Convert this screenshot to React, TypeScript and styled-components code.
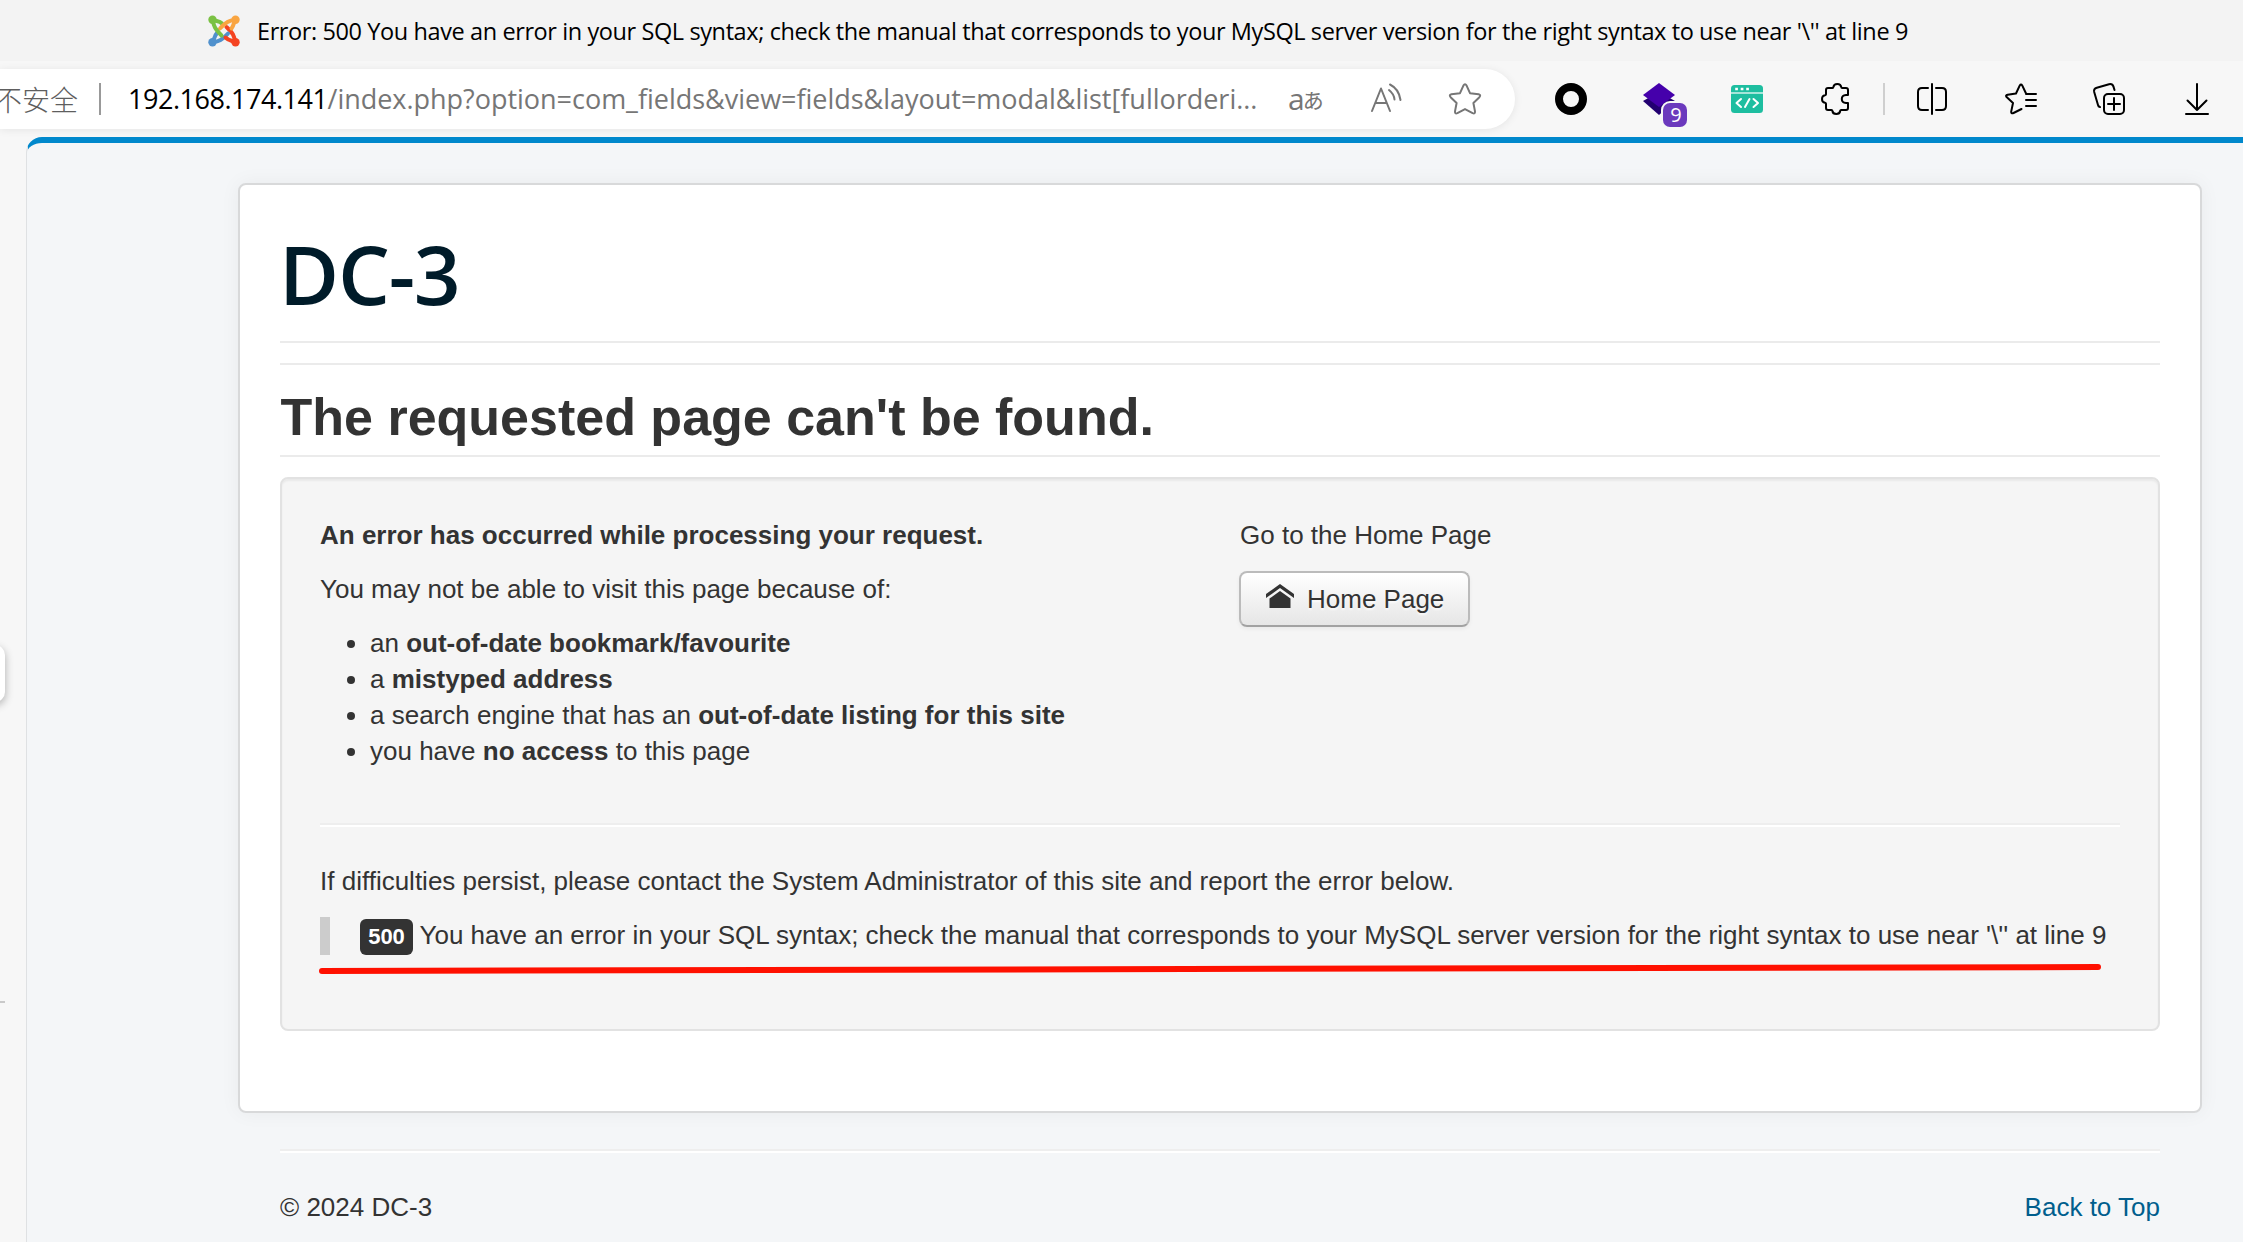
import React from "react";
import styled, { createGlobalStyle } from "styled-components";

const Global = createGlobalStyle`
  * { box-sizing: border-box; }
  html, body { margin: 0; padding: 0; overflow: hidden; }
  body { background: #f7f7f7; }
  p, ul, h1, h2 { margin: 0; }
`;
const uiFont = `"Open Sans", "Noto Sans", "Noto Sans CJK SC", sans-serif`;

const Window = styled.div`
  width: 2243px; height: 1242px; overflow: hidden;
  display: flex; flex-direction: column; background: #f7f7f7;
  font-family: "Liberation Sans", Arial, sans-serif;
`;
const TabBar = styled.header`
  height: 61px; flex: none; background: #f3f3f3; padding-left: 208px;
  display: flex; align-items: center; gap: 17px;
`;
const TabTitle = styled.span`
  font: 400 23.5px/60px ${uiFont}; color: #000; white-space: pre; letter-spacing: -0.4px;
`;
const Toolbar = styled.div`
  height: 76px; flex: none; display: flex; align-items: center; background: #f7f7f7;
`;
const Address = styled.div`
  width: 1515px; height: 60px; flex: none; background: #fff; border-radius: 0 30px 30px 0;
  box-shadow: 0 1px 8px rgba(0,0,0,.08);
  display: flex; align-items: center;
`;
const Security = styled.span`
  width: 105px; margin-left: -6px; flex: none; font: 400 28px/58px "Noto Sans CJK SC", sans-serif; font-weight: 300; color: #5e5e5e; white-space: nowrap;
`;
const Rule = styled.i<{ $h: number; $c: string }>`
  width: 2px; height: ${p => p.$h}px; background: ${p => p.$c}; flex: none;
`;
const Url = styled.span`
  width: 1160px; margin-left: 27px; flex: none; color: #767676; white-space: nowrap;
  font: 400 27px/60px ${uiFont}; letter-spacing: -0.02px;
  b { font-weight: 400; color: #000; letter-spacing: -0.47px; }
`;
const Translate = styled.span`
  width: 36px; margin-right: 46px; flex: none; color: #767676; white-space: nowrap;
  display: flex; align-items: center;
  font: 400 30px/54px ${uiFont}; letter-spacing: -1px;
  small { font: 400 21px/54px "Noto Sans CJK JP", sans-serif; margin-left: -1px; }
`;
const Icon = styled.svg<{ $ml?: number }>`
  flex: none; display: block; margin-left: ${p => p.$ml ?? 0}px; overflow: visible;
  fill: none; stroke-linecap: round; stroke-linejoin: round;
`;
const Extension = styled.div`
  position: relative; margin-left: 56px; width: 32px; height: 32px; flex: none;
`;
const Count = styled.span`
  position: absolute; left: 20px; top: 20px; width: 24px; height: 24px; border-radius: 7px;
  background: #6b39bd; color: #fff; box-shadow: 0 0 0 2px #f7f7f7;
  font: 400 20px/23px ${uiFont}; text-align: center; padding-left: 2px;
`;
const Body = styled.div`
  flex: 1; display: flex; min-height: 0;
`;
const Side = styled.aside`
  width: 26px; flex: none; display: flex; flex-direction: column; overflow: hidden;
`;
const SideTab = styled.div`
  margin: 508px 0 299px -15px; width: 20px; height: 57px; flex: none; border-radius: 10px; background: #fff;
  box-shadow: 0 3px 8px rgba(0,0,0,.3);
`;
const SideLine = styled.div`
  width: 5px; height: 2px; background: #c9c9c9;
`;
const Page = styled.main`
  flex: 1; min-width: 0; background: #f4f6f8; border-left: 1px solid #dfe1e3; border-top: 6px solid #0088cc;
  border-top-left-radius: 16px; padding: 40px 41px 0 211px; color: #333;
  font-size: 26px; line-height: 36px;
`;
const Card = styled.section`
  height: 930px; background: #fff; border: 2px solid #d8d9da; border-radius: 8px; padding: 0 40px;
  box-shadow: 0 0 20px rgba(0,0,0,.05);
`;
const Brand = styled.h1`
  height: 158px; border-bottom: 2px solid #ebebeb; padding-top: 30px; text-indent: -1px;
  font: 600 82px/116px "Open Sans", sans-serif; color: #001b29; letter-spacing: -1.2px; white-space: nowrap;
`;
const Heading = styled.h2`
  margin: 20px 0; height: 94px; border-top: 2px solid #ebebeb; border-bottom: 2px solid #ebebeb; padding-top: 15px;
  font-size: 52px; line-height: 74px; font-weight: 700; white-space: nowrap; text-indent: 0.5px;
`;
const Well = styled.div`
  height: 554px; background: #f5f5f5; border: 2px solid #e2e2e2; border-radius: 8px; padding: 38px;
  box-shadow: inset 0 2px 2px rgba(0,0,0,.05);
`;
const Columns = styled.div`
  display: grid; grid-template-columns: 880px 880px; gap: 40px; height: 270px;
`;
const Text = styled.p<{ $bold?: boolean }>`
  margin-bottom: 18px; font-weight: ${p => (p.$bold ? 700 : 400)}; white-space: nowrap;
`;
const List = styled.ul`
  padding-left: 50px;
`;
const HomeButton = styled.a`
  display: inline-flex; align-items: center; width: 231px; height: 56px; margin-left: -1px; padding-left: 25px;
  border: 2px solid #bbb; border-bottom-color: #a2a2a2; border-radius: 8px;
  background: linear-gradient(#fff, #e6e6e6); box-shadow: 0 2px 4px rgba(0,0,0,.05);
  text-shadow: 0 2px 2px rgba(255,255,255,.75); white-space: nowrap;
`;
const HomeIcon = styled.svg`
  flex: none; margin: -6px 13px 0 0;
`;
const Divider = styled.hr`
  margin: 36px 0; height: 4px; border: 0; border-top: 2px solid #eee; background: #fff;
`;
const Quote = styled.blockquote`
  position: relative; margin: 0; height: 38px; border-left: 10px solid #ccc; padding-left: 30px;
  display: flex; align-items: flex-start; white-space: nowrap;
`;
const Badge = styled.span`
  width: 53px; height: 36px; margin: 2px 6.5px 0 0; border-radius: 6px; background: #333; color: #fff;
  font-size: 22px; line-height: 35px; font-weight: 700; text-align: center;
`;
const Underline = styled.svg`
  position: absolute; left: -11px; top: 44px; overflow: visible;
`;
const Footer = styled.footer`
  padding: 0 42px;
`;
const FooterRow = styled.div`
  display: flex; justify-content: space-between;
  a { color: #005e8d; }
`;

const Joomla = () => (
  <Icon width="32" height="32" viewBox="0 0 32 32" strokeWidth="4">
    <path d="M27 27 C26.5 21 25 18 18.5 12" stroke="#f44321" />
    <path d="M5 27 C11 26.5 14 25 20 18.5" stroke="#5091cd" />
    <path d="M27 27 C23 25.5 20.5 25.5 17.5 22.5" stroke="#f44321" />
    <path d="M5 27 C6.5 23 6.5 20.5 9 18" stroke="#5091cd" />
    <path d="M5 5 C9 6.5 11.5 6 14 8.5" stroke="#7ac143" />
    <path d="M27 5 C21 5.5 18 7 12 13.5" stroke="#f9a541" />
    <path d="M27 5 C25.5 9 25.5 11 23.5 13.5" stroke="#f9a541" />
    <path d="M5 5 C5.5 11 7 14 13.5 20.5" stroke="#7ac143" />
    <g stroke="none">
      <circle cx="4.5" cy="4.8" r="4.2" fill="#7ac143" /><circle cx="27.5" cy="4.8" r="4.2" fill="#f9a541" />
      <circle cx="27.5" cy="27.2" r="4.2" fill="#f44321" /><circle cx="4.5" cy="27.2" r="4.2" fill="#5091cd" />
    </g>
  </Icon>
);

export default function App() {
  return (
    <Window>
      <Global />
      <TabBar>
        <Joomla />
        <TabTitle>{`Error: 500 You have an error in your SQL syntax; check the manual that corresponds to your MySQL server version for the right syntax to use near '\\'' at line 9`}</TabTitle>
      </TabBar>
      <Toolbar>
        <Address>
          <Security>不安全</Security>
          <Rule $h={32} $c="#999" />
          <Url><b>192.168.174.141</b>/index.php?option=com_fields&amp;view=fields&amp;layout=modal&amp;list[fullorderi...</Url>
          <Translate>a<small>あ</small></Translate>
          <Icon width="32" height="32" viewBox="0 0 32 32" stroke="#767676" strokeWidth="2">
            <path d="M2 28 L11 5.5 L20 28 M5.2 20 H16.8 M19 7 Q24 11 24.5 16.5 M20 1.5 Q29 6 30.5 17" />
          </Icon>
          <Icon $ml={46} width="34" height="32" viewBox="0 0 34 32" stroke="#767676" strokeWidth="2">
            <path d="M15.4 2.6 Q17 0 18.6 2.6 L22 10.2 L30.6 11.3 Q33.3 12 31.4 14.2 L25.4 20 L27 28.4 Q27.2 31.2 24.6 30.1 L17 26.1 L9.4 30.1 Q6.8 31.2 7 28.4 L8.6 20 L2.6 14.2 Q.7 12 3.4 11.3 L12 10.2 Z" />
          </Icon>
        </Address>
        <Icon $ml={40} width="32" height="32" viewBox="0 0 32 32"><circle cx="16" cy="16" r="12" stroke="#000" strokeWidth="8" /></Icon>
        <Extension>
          <Icon width="32" height="32" viewBox="0 0 32 32">
            <path d="M0 18 L16 9 L32 18 L16 32 Z" fill="#220070" />
            <path d="M0 12 L16 0 L32 12 L16 24 Z" fill="#4500ab" />
          </Icon>
          <Count>9</Count>
        </Extension>
        <Icon $ml={56} width="32" height="28" viewBox="0 0 32 28">
          <rect width="32" height="28" rx="3.5" fill="#1ebea0" />
          <path d="M0 8 H32" stroke="#d2f2ec" strokeWidth="1.5" strokeLinecap="butt" />
          <path d="M5.5 4 h.1 M11 4 h.1 M16.5 4 h.1" stroke="#fff" strokeWidth="2.6" strokeLinecap="square" />
          <path d="M10 14 L5.5 18 L10 22 M18.5 14 L14 22 M22.5 14 L27 18 L22.5 22" stroke="#fff" strokeWidth="2" />
        </Icon>
        <Icon $ml={58} width="28" height="32" viewBox="0 0 28 32" stroke="#000" strokeWidth="2">
          <path d="M5 7 Q5 5 7 5 H11.5 Q12.3 5 12.4 4 C13 0 19.6 0 20.2 4 Q20.3 5 21.2 5 H25 Q27 5 27 7 V12 H25 C19.4 12.4 19.4 19.6 25 20 H27 V25 Q27 27 25 27 H20.2 Q19.3 27 19.2 28 C18.6 32 12 32 11.4 28 Q11.3 27 10.4 27 H7 Q5 27 5 25 V20.8 Q5 20 4 19.8 C0 19.2 0 12.8 4 12.2 Q5 12 5 11.2 Z" />
        </Icon>
        <Icon $ml={34} width="2" height="32" viewBox="0 0 2 32"><path d="M1 0 V32" stroke="#cfcfcf" strokeWidth="2" strokeLinecap="butt" /></Icon>
        <Icon $ml={32} width="30" height="32" viewBox="0 0 30 32" stroke="#000" strokeWidth="2">
          <path d="M11 5 H5 Q1 5 1 9 V23 Q1 27 5 27 H11 M19 5 H25 Q29 5 29 9 V23 Q29 27 25 27 H19 M15 1 V31" />
        </Icon>
        <Icon $ml={58} width="32" height="32" viewBox="0 0 32 32" stroke="#000" strokeWidth="2">
          <path d="M21 11 H31 M21 17 H31 M21 23 H31 M16.5 26 L8.5 30 Q6 31 6.2 28.6 L8 20 L1.6 14.1 Q.2 12.3 2.6 11.7 L11 10.5 L14.8 2.4 Q16 .4 17.2 2.4 L20.8 10" />
        </Icon>
        <Icon $ml={56} width="32" height="32" viewBox="0 0 32 32" stroke="#000" strokeWidth="2">
          <rect x="11" y="11" width="20" height="20" rx="4" />
          <path d="M21 15 V27 M15 21 H27 M7 24 Q5.3 23.7 5 22 L1.2 9 Q.4 5.6 3.8 4.7 L16 1.2 Q19.4 .4 20.4 3.4 L21.5 7" />
        </Icon>
        <Icon $ml={60} width="24" height="32" viewBox="0 0 24 32" stroke="#000" strokeWidth="2">
          <path d="M12 1 V27 M2.5 17.5 L12 27 L21.5 17.5 M1 31 H23" />
        </Icon>
      </Toolbar>
      <Body>
        <Side><SideTab /><SideLine /></Side>
        <Page>
          <Card>
            <Brand>DC-3</Brand>
            <Heading>The requested page can't be found.</Heading>
            <Well>
              <Columns>
                <div>
                  <Text $bold>An error has occurred while processing your request.</Text>
                  <Text>You may not be able to visit this page because of:</Text>
                  <List>
                    <li>an <b>out-of-date bookmark/favourite</b></li>
                    <li>a <b>mistyped address</b></li>
                    <li>a search engine that has an <b>out-of-date listing for this site</b></li>
                    <li>you have <b>no access</b> to this page</li>
                  </List>
                </div>
                <div>
                  <Text>Go to the Home Page</Text>
                  <HomeButton>
                    <HomeIcon width="28" height="26" viewBox="0 0 28 26">
                      <path d="M0 11 L14 1 L28 11 V15 L14 5 L0 15 Z M3.5 15.5 L14 8 L24.5 15.5 V25 H3.5 Z" fill="#333" />
                    </HomeIcon>
                    Home Page
                  </HomeButton>
                </div>
              </Columns>
              <Divider />
              <Text>If difficulties persist, please contact the System Administrator of this site and report the error below.</Text>
              <Quote>
                <Badge>500</Badge>
                You have an error in your SQL syntax; check the manual that corresponds to your MySQL server version for the right syntax to use near '\'' at line 9
                <Underline width="1782" height="16" viewBox="0 0 1782 16">
                  <path d="M3 10 L1779 6" stroke="#ff1000" strokeWidth="6" strokeLinecap="round" />
                </Underline>
              </Quote>
            </Well>
          </Card>
          <Footer>
            <Divider />
            <FooterRow><span>© 2024 DC-3</span><a>Back to Top</a></FooterRow>
          </Footer>
        </Page>
      </Body>
    </Window>
  );
}
